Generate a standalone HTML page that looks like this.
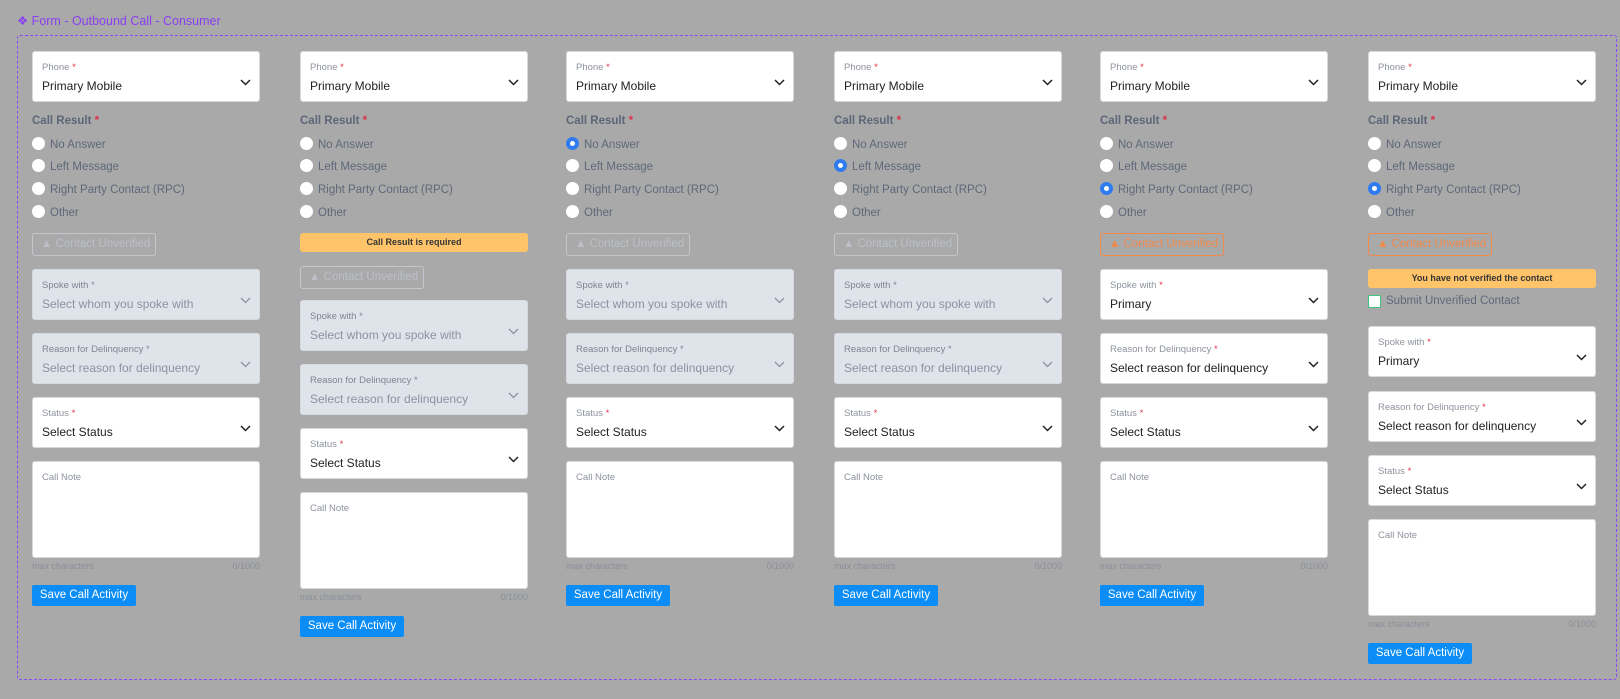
<!DOCTYPE html>
<html><head><meta charset="utf-8"><style>
*,*::before,*::after{box-sizing:border-box;margin:0;padding:0}
body{width:1620px;height:699px;background:#a9a9a9;font-family:"Liberation Sans",sans-serif;position:relative;overflow:hidden}
.title{position:absolute;left:17px;top:13px;font-size:12.5px;color:#8a3ff0}
.frame{position:absolute;left:17px;top:35px;width:1600px;height:645px;border:1.5px dashed #8a4af3;border-radius:3px}
.col{position:absolute;top:0;width:229px;height:699px}
.a{position:absolute}
.f{position:absolute;left:0;width:228px;height:51px;background:#fff;border:1px solid #d6d9de;border-radius:3px}
.f.d{background:#dfe3ea}
.f .l{position:absolute;left:9px;top:10px;font-size:9.5px;color:#8d929c}
.f .v{position:absolute;left:9px;top:27px;font-size:12px;color:#222}
.f.d .v{color:#8a93a3}
.f.d .l{color:#7d8594}
.r{color:#e0334a}
.f svg{position:absolute;right:8px;top:27px}
.note{height:97px}
.lab{position:absolute;left:0;top:115px;font-size:11.5px;font-weight:bold;color:#5d6678}
.rad{position:absolute;left:0;font-size:11.5px;color:#5f6879;height:16px;display:flex;align-items:center;gap:5px}
.rad:before{content:"";display:block;flex:none;width:13px;height:13px;border-radius:50%;background:#fff;position:relative;top:-2px}
.rad.on:before{border:4px solid #2f7cf0}
.cu{position:absolute;left:0;height:23px;width:124px;border:1px solid #c3c7cd;border-radius:3px;font-size:11.5px;color:#bcc0c6;line-height:21px;padding-left:8px;white-space:nowrap}
.cu.o{border-color:#f08a4b;color:#f08a4b}
.ban{position:absolute;left:0;width:228px;height:19px;background:#ffc46a;border-radius:3px;font-size:9px;font-weight:bold;color:#333;text-align:center;line-height:19px}
.mx{position:absolute;left:0;width:228px;font-size:9px;color:#8a8f99}
.mx span{float:right}
.btn{position:absolute;left:0;width:104px;height:21px;background:#0c8cf5;border-radius:2px;color:#fff;font-size:11.5px;text-align:center;line-height:21px}
</style></head><body>
<div class="title">❖ Form - Outbound Call - Consumer</div>
<div class="frame"></div>

<!-- col1 -->
<div class="col" style="left:32px">
<div class="f" style="top:51px"><div class="l">Phone <span class="r">*</span></div><div class="v">Primary Mobile</div><svg width="11" height="7"><path d="M1 1l4.5 4.5 4.5-4.5" fill="none" stroke="#222" stroke-width="1.5"/></svg></div>
<div class="lab">Call Result <span class="r">*</span></div>
<div class="rad" style="top:137px">No Answer</div>
<div class="rad" style="top:159px">Left Message</div>
<div class="rad" style="top:182px">Right Party Contact (RPC)</div>
<div class="rad" style="top:205px">Other</div>
<div class="cu" style="top:233px">▲ Contact Unverified</div>
<div class="f d" style="top:269px"><div class="l">Spoke with *</div><div class="v">Select whom you spoke with</div><svg width="11" height="7"><path d="M1 1l4.5 4.5 4.5-4.5" fill="none" stroke="#8a93a3" stroke-width="1.3"/></svg></div>
<div class="f d" style="top:333px"><div class="l">Reason for Delinquency *</div><div class="v">Select reason for delinquency</div><svg width="11" height="7"><path d="M1 1l4.5 4.5 4.5-4.5" fill="none" stroke="#8a93a3" stroke-width="1.3"/></svg></div>
<div class="f" style="top:397px"><div class="l">Status <span class="r">*</span></div><div class="v">Select Status</div><svg width="11" height="7"><path d="M1 1l4.5 4.5 4.5-4.5" fill="none" stroke="#222" stroke-width="1.5"/></svg></div>
<div class="f note" style="top:461px"><div class="l">Call Note</div></div>
<div class="mx" style="top:561px">max characters<span>0/1000</span></div>
<div class="btn" style="top:585px">Save Call Activity</div>
</div>

<!-- col2 -->
<div class="col" style="left:300px">
<div class="f" style="top:51px"><div class="l">Phone <span class="r">*</span></div><div class="v">Primary Mobile</div><svg width="11" height="7"><path d="M1 1l4.5 4.5 4.5-4.5" fill="none" stroke="#222" stroke-width="1.5"/></svg></div>
<div class="lab">Call Result <span class="r">*</span></div>
<div class="rad" style="top:137px">No Answer</div>
<div class="rad" style="top:159px">Left Message</div>
<div class="rad" style="top:182px">Right Party Contact (RPC)</div>
<div class="rad" style="top:205px">Other</div>
<div class="ban" style="top:233px">Call Result is required</div>
<div class="cu" style="top:266px">▲ Contact Unverified</div>
<div class="f d" style="top:300px"><div class="l">Spoke with *</div><div class="v">Select whom you spoke with</div><svg width="11" height="7"><path d="M1 1l4.5 4.5 4.5-4.5" fill="none" stroke="#8a93a3" stroke-width="1.3"/></svg></div>
<div class="f d" style="top:364px"><div class="l">Reason for Delinquency *</div><div class="v">Select reason for delinquency</div><svg width="11" height="7"><path d="M1 1l4.5 4.5 4.5-4.5" fill="none" stroke="#8a93a3" stroke-width="1.3"/></svg></div>
<div class="f" style="top:428px"><div class="l">Status <span class="r">*</span></div><div class="v">Select Status</div><svg width="11" height="7"><path d="M1 1l4.5 4.5 4.5-4.5" fill="none" stroke="#222" stroke-width="1.5"/></svg></div>
<div class="f note" style="top:492px"><div class="l">Call Note</div></div>
<div class="mx" style="top:592px">max characters<span>0/1000</span></div>
<div class="btn" style="top:616px">Save Call Activity</div>
</div>

<!-- col3 -->
<div class="col" style="left:566px">
<div class="f" style="top:51px"><div class="l">Phone <span class="r">*</span></div><div class="v">Primary Mobile</div><svg width="11" height="7"><path d="M1 1l4.5 4.5 4.5-4.5" fill="none" stroke="#222" stroke-width="1.5"/></svg></div>
<div class="lab">Call Result <span class="r">*</span></div>
<div class="rad on" style="top:137px">No Answer</div>
<div class="rad" style="top:159px">Left Message</div>
<div class="rad" style="top:182px">Right Party Contact (RPC)</div>
<div class="rad" style="top:205px">Other</div>
<div class="cu" style="top:233px">▲ Contact Unverified</div>
<div class="f d" style="top:269px"><div class="l">Spoke with *</div><div class="v">Select whom you spoke with</div><svg width="11" height="7"><path d="M1 1l4.5 4.5 4.5-4.5" fill="none" stroke="#8a93a3" stroke-width="1.3"/></svg></div>
<div class="f d" style="top:333px"><div class="l">Reason for Delinquency *</div><div class="v">Select reason for delinquency</div><svg width="11" height="7"><path d="M1 1l4.5 4.5 4.5-4.5" fill="none" stroke="#8a93a3" stroke-width="1.3"/></svg></div>
<div class="f" style="top:397px"><div class="l">Status <span class="r">*</span></div><div class="v">Select Status</div><svg width="11" height="7"><path d="M1 1l4.5 4.5 4.5-4.5" fill="none" stroke="#222" stroke-width="1.5"/></svg></div>
<div class="f note" style="top:461px"><div class="l">Call Note</div></div>
<div class="mx" style="top:561px">max characters<span>0/1000</span></div>
<div class="btn" style="top:585px">Save Call Activity</div>
</div>

<!-- col4 -->
<div class="col" style="left:834px">
<div class="f" style="top:51px"><div class="l">Phone <span class="r">*</span></div><div class="v">Primary Mobile</div><svg width="11" height="7"><path d="M1 1l4.5 4.5 4.5-4.5" fill="none" stroke="#222" stroke-width="1.5"/></svg></div>
<div class="lab">Call Result <span class="r">*</span></div>
<div class="rad" style="top:137px">No Answer</div>
<div class="rad on" style="top:159px">Left Message</div>
<div class="rad" style="top:182px">Right Party Contact (RPC)</div>
<div class="rad" style="top:205px">Other</div>
<div class="cu" style="top:233px">▲ Contact Unverified</div>
<div class="f d" style="top:269px"><div class="l">Spoke with *</div><div class="v">Select whom you spoke with</div><svg width="11" height="7"><path d="M1 1l4.5 4.5 4.5-4.5" fill="none" stroke="#8a93a3" stroke-width="1.3"/></svg></div>
<div class="f d" style="top:333px"><div class="l">Reason for Delinquency *</div><div class="v">Select reason for delinquency</div><svg width="11" height="7"><path d="M1 1l4.5 4.5 4.5-4.5" fill="none" stroke="#8a93a3" stroke-width="1.3"/></svg></div>
<div class="f" style="top:397px"><div class="l">Status <span class="r">*</span></div><div class="v">Select Status</div><svg width="11" height="7"><path d="M1 1l4.5 4.5 4.5-4.5" fill="none" stroke="#222" stroke-width="1.5"/></svg></div>
<div class="f note" style="top:461px"><div class="l">Call Note</div></div>
<div class="mx" style="top:561px">max characters<span>0/1000</span></div>
<div class="btn" style="top:585px">Save Call Activity</div>
</div>

<!-- col5 -->
<div class="col" style="left:1100px">
<div class="f" style="top:51px"><div class="l">Phone <span class="r">*</span></div><div class="v">Primary Mobile</div><svg width="11" height="7"><path d="M1 1l4.5 4.5 4.5-4.5" fill="none" stroke="#222" stroke-width="1.5"/></svg></div>
<div class="lab">Call Result <span class="r">*</span></div>
<div class="rad" style="top:137px">No Answer</div>
<div class="rad" style="top:159px">Left Message</div>
<div class="rad on" style="top:182px">Right Party Contact (RPC)</div>
<div class="rad" style="top:205px">Other</div>
<div class="cu o" style="top:233px">▲ Contact Unverified</div>
<div class="f" style="top:269px"><div class="l">Spoke with <span class="r">*</span></div><div class="v">Primary</div><svg width="11" height="7"><path d="M1 1l4.5 4.5 4.5-4.5" fill="none" stroke="#222" stroke-width="1.5"/></svg></div>
<div class="f" style="top:333px"><div class="l">Reason for Delinquency <span class="r">*</span></div><div class="v">Select reason for delinquency</div><svg width="11" height="7"><path d="M1 1l4.5 4.5 4.5-4.5" fill="none" stroke="#222" stroke-width="1.5"/></svg></div>
<div class="f" style="top:397px"><div class="l">Status <span class="r">*</span></div><div class="v">Select Status</div><svg width="11" height="7"><path d="M1 1l4.5 4.5 4.5-4.5" fill="none" stroke="#222" stroke-width="1.5"/></svg></div>
<div class="f note" style="top:461px"><div class="l">Call Note</div></div>
<div class="mx" style="top:561px">max characters<span>0/1000</span></div>
<div class="btn" style="top:585px">Save Call Activity</div>
</div>

<!-- col6 -->
<div class="col" style="left:1368px">
<div class="f" style="top:51px"><div class="l">Phone <span class="r">*</span></div><div class="v">Primary Mobile</div><svg width="11" height="7"><path d="M1 1l4.5 4.5 4.5-4.5" fill="none" stroke="#222" stroke-width="1.5"/></svg></div>
<div class="lab">Call Result <span class="r">*</span></div>
<div class="rad" style="top:137px">No Answer</div>
<div class="rad" style="top:159px">Left Message</div>
<div class="rad on" style="top:182px">Right Party Contact (RPC)</div>
<div class="rad" style="top:205px">Other</div>
<div class="cu o" style="top:233px">▲ Contact Unverified</div>
<div class="ban" style="top:269px">You have not verified the contact</div>
<div class="a" style="left:0;top:295px;width:13px;height:13px;background:#fff;border:1px solid #3cc47c;border-radius:2px"></div>
<div class="a" style="left:18px;top:295px;font-size:11.5px;color:#5f6879">Submit Unverified Contact</div>
<div class="f" style="top:326px"><div class="l">Spoke with <span class="r">*</span></div><div class="v">Primary</div><svg width="11" height="7"><path d="M1 1l4.5 4.5 4.5-4.5" fill="none" stroke="#222" stroke-width="1.5"/></svg></div>
<div class="f" style="top:391px"><div class="l">Reason for Delinquency <span class="r">*</span></div><div class="v">Select reason for delinquency</div><svg width="11" height="7"><path d="M1 1l4.5 4.5 4.5-4.5" fill="none" stroke="#222" stroke-width="1.5"/></svg></div>
<div class="f" style="top:455px"><div class="l">Status <span class="r">*</span></div><div class="v">Select Status</div><svg width="11" height="7"><path d="M1 1l4.5 4.5 4.5-4.5" fill="none" stroke="#222" stroke-width="1.5"/></svg></div>
<div class="f note" style="top:519px"><div class="l">Call Note</div></div>
<div class="mx" style="top:619px">max characters<span>0/1000</span></div>
<div class="btn" style="top:643px">Save Call Activity</div>
</div>
</body></html>
